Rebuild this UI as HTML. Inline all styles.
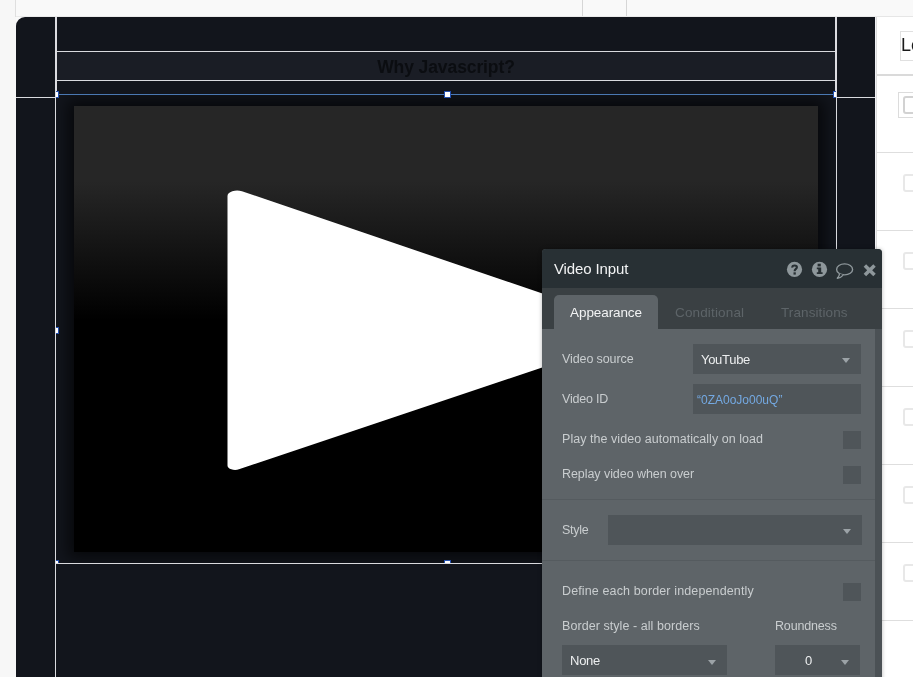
<!DOCTYPE html>
<html>
<head>
<meta charset="utf-8">
<style>
html,body{margin:0;padding:0;}
body{width:913px;height:677px;overflow:hidden;position:relative;background:#f7f7f7;font-family:"Liberation Sans",sans-serif;}
.abs{position:absolute;}
.txt{will-change:transform;}
/* canvas */
#canvas{left:16px;top:17px;width:859px;height:660px;background:#12151c;border-top-left-radius:9px;}
.wl{background:#d9dade;}
#band{left:56px;top:52px;width:780px;height:28px;background:#1a1d25;}
#title{left:56px;top:53px;width:780px;height:28px;line-height:28px;text-align:center;font-weight:bold;font-size:17.5px;letter-spacing:-0.1px;color:#0b0d11;}
#video{width:744px;height:446px;background:linear-gradient(to bottom,#262626 0%,#262626 17%,#000 48%,#000 100%);box-shadow:0 0 14px 6px rgba(0,0,0,0.62);}
.handle{width:5px;height:5px;background:#fff;border:1px solid #2350af;}
/* right panel */
#rp{left:877px;top:17px;width:36px;height:660px;background:#fff;}
.rdiv{left:877px;width:36px;height:1px;background:#dedede;}
.cb{left:903px;width:14px;height:14px;border:2px solid #e8e8e8;border-radius:3px;background:#fff;}
/* popup */
#pop{left:542px;top:249px;width:340px;height:440px;background:#5e6468;border-top-left-radius:4px;border-top-right-radius:4px;overflow:hidden;box-shadow:0 0 4px rgba(0,0,0,0.28);}
#pop .hd{left:0;top:0;width:340px;height:39px;background:#283034;}
#pop .tabs{left:0;top:39px;width:340px;height:41px;background:#3a4043;}
#pop .tab1{left:12px;top:46px;width:104px;height:35px;background:#5e6468;border-top-left-radius:5px;border-top-right-radius:5px;}
#pop .sb{left:333px;top:80px;width:7px;height:400px;background:#4b5155;}
.lbl{color:#c9cdcf;font-size:12.5px;line-height:16px;white-space:nowrap;}
.fld{background:#4f5559;}
.val{color:#eceeef;font-size:13px;line-height:16px;white-space:nowrap;}
.arr{width:0;height:0;border-left:4.5px solid transparent;border-right:4.5px solid transparent;border-top:5px solid #9ca3a7;}
.hdiv{height:1px;background:#555b5f;}
</style>
</head>
<body>
<!-- top strip details -->
<div class="abs" style="left:16px;top:0;width:897px;height:26px;background:#f9f9f9;"></div>
<div class="abs" style="left:16px;top:16px;width:861px;height:1px;background:#eaeaea;"></div>
<div class="abs" style="left:15px;top:0;width:1px;height:17px;background:#dfdfdf;"></div>
<div class="abs" style="left:582px;top:0;width:1px;height:16px;background:#d6d6d6;"></div>
<div class="abs" style="left:626px;top:0;width:1px;height:16px;background:#d6d6d6;"></div>

<div id="canvas" class="abs"></div>
<div class="abs" style="left:875px;top:17px;width:1px;height:660px;background:#f0f0f4;"></div>
<div class="abs" style="left:876px;top:17px;width:1px;height:660px;background:#dcdcdc;"></div>

<!-- title band -->
<div id="band" class="abs"></div>
<div id="title" class="abs txt">Why Javascript?</div>

<!-- video -->
<div class="abs" style="left:56px;top:95px;width:780px;height:468px;overflow:hidden;"><div id="video" class="abs" style="left:18px;top:11px;"></div></div>
<svg class="abs" style="left:74px;top:106px;" width="744" height="446" viewBox="74 106 744 446">
  <path transform="translate(227.5 0) scale(1.72 1)" d="M0 196.07 A5.6 5.6 0 0 1 8.43 191.24 L246.6 330.75 L6.66 469.3 A4.44 4.44 0 0 1 0 465.46 Z" fill="#fff"/>
</svg>

<!-- selection box (clipped by parent bounds) -->
<div class="abs" style="left:56px;top:17px;width:780px;height:546px;overflow:hidden;">
  <div class="abs" style="left:0;top:77px;width:780px;height:1px;background:#4a78b2;"></div>
  <div class="abs handle" style="left:388px;top:74px;"></div>
  <div class="abs handle" style="left:-4px;top:74px;"></div>
  <div class="abs handle" style="left:777px;top:74px;"></div>
  <div class="abs handle" style="left:-4px;top:310px;"></div>
  <div class="abs handle" style="left:388px;top:543px;"></div>
  <div class="abs handle" style="left:-4px;top:543px;"></div>
</div>

<!-- white guide lines -->
<div class="abs wl" style="left:56px;top:51px;width:780px;height:1px;"></div>
<div class="abs wl" style="left:56px;top:80px;width:780px;height:1px;"></div>
<div class="abs wl" style="left:16px;top:97px;width:40px;height:1px;"></div>
<div class="abs wl" style="left:836px;top:97px;width:39px;height:1px;"></div>
<div class="abs wl" style="left:56px;top:563px;width:780px;height:1px;"></div>
<div class="abs" style="left:55px;top:17px;width:1px;height:660px;background:#d9dade;"></div>
<div class="abs" style="left:836px;top:17px;width:1px;height:660px;background:#d9dade;"></div>
<div class="abs" style="left:55px;top:17px;width:2px;height:74px;background:#dcdce1;"></div>
<div class="abs" style="left:835px;top:17px;width:2px;height:74px;background:#dcdce1;"></div>

<!-- right panel -->
<div id="rp" class="abs"></div>
<div class="abs" style="left:877px;top:16px;width:36px;height:1px;background:#e6e6e6;"></div>
<div class="abs" style="left:900px;top:31px;width:20px;height:28px;border:1px solid #e0e0e0;background:#fff;"></div>
<div class="abs txt" style="left:901px;top:32px;font-size:18px;line-height:26px;color:#1a1a1a;white-space:nowrap;">Lo</div>
<div class="abs rdiv" style="top:74px;height:2px;background:#dadada;"></div>
<div class="abs" style="left:898px;top:92px;width:20px;height:24px;border:1px solid #dcdcdc;background:#fff;"></div>
<div class="abs cb" style="top:96px;border-color:#d2d2d2;"></div>
<div class="abs rdiv" style="top:152px;"></div>
<div class="abs cb" style="top:174px;"></div>
<div class="abs rdiv" style="top:230px;"></div>
<div class="abs cb" style="top:252px;"></div>
<div class="abs rdiv" style="top:308px;"></div>
<div class="abs cb" style="top:330px;"></div>
<div class="abs rdiv" style="top:386px;"></div>
<div class="abs cb" style="top:408px;"></div>
<div class="abs rdiv" style="top:464px;"></div>
<div class="abs cb" style="top:486px;"></div>
<div class="abs rdiv" style="top:542px;"></div>
<div class="abs cb" style="top:564px;"></div>
<div class="abs rdiv" style="top:620px;"></div>

<!-- popup -->
<div id="pop" class="abs txt">
  <div class="abs hd"></div>
  <div class="abs tabs"></div>
  <div class="abs tab1"></div>
  <div class="abs sb"></div>
  <div class="abs" style="letter-spacing:-0.12px;left:12px;top:11px;font-size:15px;line-height:18px;color:#f2f3f4;white-space:nowrap;">Video Input</div>
  <div class="abs" style="letter-spacing:-0.1px;left:12px;top:55px;width:104px;text-align:center;font-size:13.5px;line-height:18px;color:#f2f3f4;white-space:nowrap;">Appearance</div>
  <div class="abs" style="left:133px;top:55px;font-size:13.5px;letter-spacing:0.15px;line-height:18px;color:#5d6468;white-space:nowrap;">Conditional</div>
  <div class="abs" style="left:239px;top:55px;font-size:13.5px;letter-spacing:0.1px;line-height:18px;color:#5d6468;white-space:nowrap;">Transitions</div>

  <!-- icons -->
  <svg class="abs" style="left:0;top:0;" width="340" height="39" viewBox="542 249 340 39">
    <circle cx="794.5" cy="269.4" r="7.6" fill="#8e979b"/>
    <path d="M792.3 267.6 C792.2 265.9 793.3 265.5 794.6 265.5 C796 265.5 796.9 266.2 796.9 267.3 C796.9 268.9 794.6 268.9 794.6 271.3" fill="none" stroke="#283034" stroke-width="2.1"/>
    <rect x="793.5" y="272.3" width="2.3" height="2.3" fill="#283034"/>
    <circle cx="819.5" cy="269.4" r="7.6" fill="#8e979b"/>
    <rect x="817.6" y="263.7" width="3.2" height="2.7" fill="#283034"/>
    <path d="M816.8 267.5 H821.2 V272.3 H822.6 V274.1 H816.8 V272.3 H818.2 V269.3 H816.8 Z" fill="#283034"/>
    <ellipse cx="844.6" cy="269.4" rx="8" ry="5.5" fill="none" stroke="#8e979b" stroke-width="1.4"/>
    <path d="M839.6 273.6 C839.4 275.4 838.6 276.9 837.3 278.3 C839.8 277.9 841.8 276.8 843.2 275.1" fill="#283034" stroke="#8e979b" stroke-width="1.3" stroke-linejoin="round"/>
    <path d="M864.9 265.5 L874.5 275.1 M874.5 265.5 L864.9 275.1" stroke="#8e979b" stroke-width="3.5" stroke-linecap="butt" fill="none"/>
  </svg>

  <!-- rows -->
  <div class="abs lbl" style="letter-spacing:-0.1px;left:20px;top:102px;">Video source</div>
  <div class="abs fld" style="left:151px;top:95px;width:168px;height:30px;"></div>
  <div class="abs val" style="letter-spacing:-0.3px;left:159px;top:103px;">YouTube</div>
  <div class="abs arr" style="left:300px;top:109px;"></div>

  <div class="abs lbl" style="letter-spacing:-0.2px;left:20px;top:142px;">Video ID</div>
  <div class="abs fld" style="left:151px;top:135px;width:168px;height:30px;"></div>
  <div class="abs" style="left:155px;top:143px;font-size:12px;line-height:16px;color:#74a9e2;white-space:nowrap;">“0ZA0oJo00uQ”</div>

  <div class="abs lbl" style="letter-spacing:0.045px;left:20px;top:182px;">Play the video automatically on load</div>
  <div class="abs fld" style="left:301px;top:182px;width:18px;height:18px;"></div>
  <div class="abs lbl" style="letter-spacing:-0.06px;left:20px;top:217px;">Replay video when over</div>
  <div class="abs fld" style="left:301px;top:217px;width:18px;height:18px;"></div>

  <div class="abs hdiv" style="left:0;top:250px;width:333px;"></div>
  <div class="abs lbl" style="letter-spacing:-0.3px;left:20px;top:273px;">Style</div>
  <div class="abs fld" style="left:66px;top:266px;width:254px;height:30px;"></div>
  <div class="abs arr" style="left:301px;top:280px;"></div>
  <div class="abs hdiv" style="left:0;top:311px;width:333px;"></div>

  <div class="abs lbl" style="letter-spacing:0.13px;left:20px;top:334px;">Define each border independently</div>
  <div class="abs fld" style="left:301px;top:334px;width:18px;height:18px;"></div>
  <div class="abs lbl" style="letter-spacing:0.06px;left:20px;top:369px;">Border style - all borders</div>
  <div class="abs lbl" style="letter-spacing:-0.17px;left:233px;top:369px;">Roundness</div>
  <div class="abs fld" style="left:20px;top:396px;width:165px;height:30px;"></div>
  <div class="abs val" style="letter-spacing:-0.25px;left:28px;top:404px;">None</div>
  <div class="abs arr" style="left:166px;top:411px;"></div>
  <div class="abs fld" style="left:233px;top:396px;width:85px;height:30px;"></div>
  <div class="abs val" style="left:263px;top:404px;">0</div>
  <div class="abs arr" style="left:299px;top:411px;"></div>
</div>
</body>
</html>
